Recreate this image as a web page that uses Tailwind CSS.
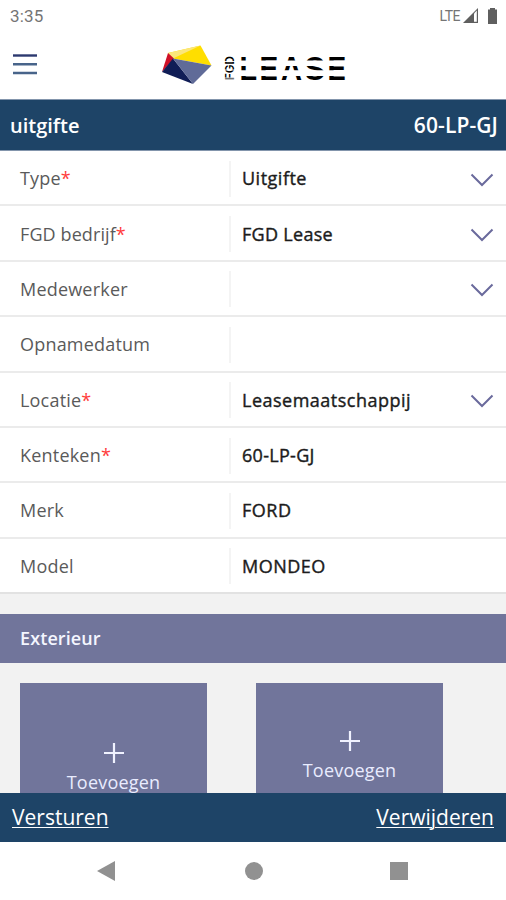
<!DOCTYPE html>
<html lang="nl">
<head>
<meta charset="utf-8">
<title>FGD Lease</title>
<script src="https://cdn.jsdelivr.net/npm/@tailwindcss/browser@4"></script>
</head>
<body class="bg-white">
<div class="flex h-[900px] w-[506px] flex-col overflow-hidden bg-white font-['Open_Sans',sans-serif]">
  <div class="flex h-[32px] shrink-0 items-center justify-between pr-[8px] pl-[10px] text-[#757575]">
    <span class="font-[Roboto,sans-serif] text-[17px] leading-none tracking-[0.2px]">3:35</span>
    <div class="flex items-center">
      <span class="mr-[3px] font-[Roboto,sans-serif] text-[14px] leading-none tracking-[-0.5px]">LTE</span>
      <svg class="mr-[8px]" width="16" height="16" viewBox="0 0 16 16"><path d="M0 15L15 0V15Z" fill="#5f5f5f"/><path d="M11 5.5L13.8 2.5V13.8H11Z" fill="#fff"/></svg>
      <svg width="11" height="16" viewBox="0 0 11 16"><path d="M3 0H8V1.5H10V16H1V1.500H3Z" fill="#5f5f5f"/></svg>
    </div>
  </div>
  <header class="flex h-[67px] shrink-0 items-start pl-[13px]">
    <svg class="mt-[21px]" width="24" height="23" viewBox="0 0 24 23"><path d="M0 2.500H24" stroke="#2c396f" stroke-width="2.400"/><path d="M0 11.200H24M0 20H24" stroke="#48648a" stroke-width="2.400"/></svg>
    <svg class="mt-[9px] ml-[121px]" width="192" height="46" viewBox="158 41 192 46">
      <path d="M168 53L200.500 45.500L211.500 65.500L173 58.500Z" fill="#ffde00"/>
      <path d="M168 53L200.500 45.500L173 58.500Z" fill="#fbe67a"/>
      <path d="M168 53L174 58.500L162 72Z" fill="#cf1027"/>
      <path d="M173 58.500L193 84L162 72Z" fill="#101d56"/>
      <path d="M173 58.500L211.500 65.500L193 84Z" fill="#606b98"/>
      <text transform="translate(233.500 80) rotate(-90)" font-family="Inter, sans-serif" font-size="12" font-weight="600" textLength="24" lengthAdjust="spacingAndGlyphs">FGD</text>
      <path d="M223 78H235M223 70H235M223 61.500H235" stroke="#fff" stroke-width="0.900"/>
      <g font-family="Inter, sans-serif" font-size="31.700" font-weight="600">
        <text x="239" y="79.700" textLength="18.500" lengthAdjust="spacingAndGlyphs">L</text>
        <text x="259" y="79.700" textLength="19.500" lengthAdjust="spacingAndGlyphs">E</text>
        <text x="281" y="79.700" textLength="21" lengthAdjust="spacingAndGlyphs">A</text>
        <text x="304" y="79.700" textLength="21.500" lengthAdjust="spacingAndGlyphs">S</text>
        <text x="327" y="79.700" textLength="19.500" lengthAdjust="spacingAndGlyphs">E</text>
      </g>
      <path d="M238 63.300H350M238 73.100H350" stroke="#fff" stroke-width="5.600"/>
    </svg>
  </header>
  <div class="flex h-[52px] shrink-0 items-center justify-between border-y border-[#8395ac] bg-[#1e4467] pt-[2px] pr-[8px] pl-[10px] text-[20px] font-semibold text-white">
    <span>uitgifte</span><span class="text-[21px] tracking-[0.1px]">60-LP-GJ</span>
  </div>
  <div class="grid h-[443px] shrink-0 grid-rows-8 text-[18px] text-[#5a5a5a]">
    <div class="flex items-center border-b-2 border-[#ebebeb] pt-[2px] pr-[12px] pl-[20px]"><span class="w-[209px] tracking-[0.2px]">Type<span class="text-[#ff3b3b]">*</span></span><span class="flex h-[36px] flex-1 items-center border-l-2 border-[#f4f4f4] pl-[11px] tracking-[0.5px] text-[#1c1c1c] [-webkit-text-stroke:0.4px_#1c1c1c]">Uitgifte</span><svg class="mt-[2px]" width="24" height="14" viewBox="0 0 24 14"><path d="M1.500 1.500L12 12L22.500 1.500" fill="none" stroke="#6a6a9c" stroke-width="2"/></svg></div>
    <div class="flex items-center border-b-2 border-[#ebebeb] pt-[2px] pr-[12px] pl-[20px]"><span class="w-[209px] tracking-[0.1px]">FGD bedrijf<span class="text-[#ff3b3b]">*</span></span><span class="flex h-[36px] flex-1 items-center border-l-2 border-[#f4f4f4] pl-[11px] tracking-[0.3px] text-[#1c1c1c] [-webkit-text-stroke:0.4px_#1c1c1c]">FGD Lease</span><svg class="mt-[2px]" width="24" height="14" viewBox="0 0 24 14"><path d="M1.500 1.500L12 12L22.500 1.500" fill="none" stroke="#6a6a9c" stroke-width="2"/></svg></div>
    <div class="flex items-center border-b-2 border-[#ebebeb] pt-[2px] pr-[12px] pl-[20px]"><span class="w-[209px] tracking-[0.2px]">Medewerker</span><span class="h-[36px] flex-1 border-l-2 border-[#f4f4f4]"></span><svg class="mt-[2px]" width="24" height="14" viewBox="0 0 24 14"><path d="M1.500 1.500L12 12L22.500 1.500" fill="none" stroke="#6a6a9c" stroke-width="2"/></svg></div>
    <div class="flex items-center border-b-2 border-[#ebebeb] pt-[2px] pr-[12px] pl-[20px]"><span class="w-[209px] tracking-[0.2px]">Opnamedatum</span><span class="h-[36px] flex-1 border-l-2 border-[#f4f4f4]"></span></div>
    <div class="flex items-center border-b-2 border-[#ebebeb] pt-[2px] pr-[12px] pl-[20px]"><span class="w-[209px] tracking-[0.2px]">Locatie<span class="text-[#ff3b3b]">*</span></span><span class="flex h-[36px] flex-1 items-center border-l-2 border-[#f4f4f4] pl-[11px] tracking-[0.5px] text-[#1c1c1c] [-webkit-text-stroke:0.4px_#1c1c1c]">Leasemaatschappij</span><svg class="mt-[2px]" width="24" height="14" viewBox="0 0 24 14"><path d="M1.500 1.500L12 12L22.500 1.500" fill="none" stroke="#6a6a9c" stroke-width="2"/></svg></div>
    <div class="flex items-center border-b-2 border-[#ebebeb] pt-[2px] pr-[12px] pl-[20px]"><span class="w-[209px] tracking-[0.2px]">Kenteken<span class="text-[#ff3b3b]">*</span></span><span class="flex h-[36px] flex-1 items-center border-l-2 border-[#f4f4f4] pl-[11px] tracking-[0.3px] text-[#1c1c1c] [-webkit-text-stroke:0.4px_#1c1c1c]">60-LP-GJ</span></div>
    <div class="flex items-center border-b-2 border-[#ebebeb] pt-[2px] pr-[12px] pl-[20px]"><span class="w-[209px] tracking-[0.2px]">Merk</span><span class="flex h-[36px] flex-1 items-center border-l-2 border-[#f4f4f4] pl-[11px] tracking-[0.5px] text-[#1c1c1c] [-webkit-text-stroke:0.4px_#1c1c1c]">FORD</span></div>
    <div class="flex items-center border-b-2 border-[#e2e2e2] pt-[2px] pr-[12px] pl-[20px]"><span class="w-[209px] tracking-[0.2px]">Model</span><span class="flex h-[36px] flex-1 items-center border-l-2 border-[#f4f4f4] pl-[11px] tracking-[0.5px] text-[#1c1c1c] [-webkit-text-stroke:0.4px_#1c1c1c]">MONDEO</span></div>
  </div>
  <main class="h-[199px] shrink-0 overflow-hidden bg-[#f2f2f2] pt-[20px]">
    <h2 class="flex h-[49px] items-center bg-[#71759b] pl-[20px] text-[18px] font-semibold tracking-[0.1px] text-[#f4f6ff]">Exterieur</h2>
    <div class="flex gap-[49px] pt-[20px] pl-[20px] text-[18px] leading-[24px] tracking-[0.2px] text-[#e9ecff]">
      <div class="flex h-[140px] w-[187px] flex-col items-center bg-[#71759b] pt-[59px]">
        <svg width="22" height="22" viewBox="0 0 22 22"><path d="M11 1V21M1 11H21" stroke="#f0f2ff" stroke-width="2.200"/></svg>
        <span class="mt-[6px]">Toevoegen</span>
      </div>
      <div class="flex h-[140px] w-[187px] flex-col items-center bg-[#71759b] pt-[47px]">
        <svg width="22" height="22" viewBox="0 0 22 22"><path d="M11 1V21M1 11H21" stroke="#f0f2ff" stroke-width="2.200"/></svg>
        <span class="mt-[6px]">Toevoegen</span>
      </div>
    </div>
  </main>
  <footer class="flex h-[49px] shrink-0 items-center justify-between bg-[#1e4467] px-[12px] text-[21px] text-white underline decoration-1 underline-offset-2">
    <span>Versturen</span><span>Verwijderen</span>
  </footer>
  <nav class="flex h-[58px] shrink-0 items-center pl-[97px]">
    <svg width="18" height="20" viewBox="0 0 18 20"><path d="M0 10L18 0V20Z" fill="#919191"/></svg>
    <div class="ml-[130px] size-[18px] rounded-full bg-[#919191]"></div>
    <div class="ml-[127px] size-[18px] bg-[#919191]"></div>
  </nav>
</div>
</body>
</html>
